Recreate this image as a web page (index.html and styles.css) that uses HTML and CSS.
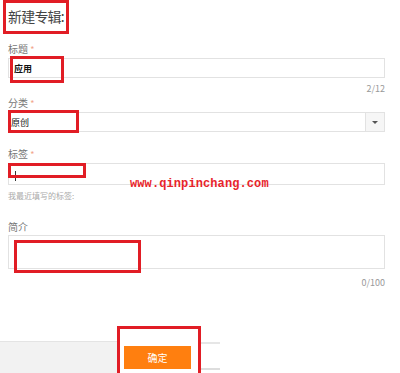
FILE: index.html
```html
<!DOCTYPE html>
<html lang="zh-CN">
<head>
  <meta charset="UTF-8">
  <title>新建专辑</title>
  <link rel="stylesheet" href="styles.css">
</head>
<body>
  <div class="page">
    <h2 class="title">新建专辑:</h2>

    <div class="field name">
      <label class="label">标题 <span class="req">*</span></label>
      <div class="input"><span class="value">应用</span></div>
      <div class="count">2/12</div>
    </div>

    <div class="field type">
      <label class="label">分类 <span class="req">*</span></label>
      <div class="select">
        <span class="value plain">原创</span>
        <span class="arrow"></span>
      </div>
    </div>

    <div class="field tags">
      <label class="label">标签 <span class="req">*</span></label>
      <div class="input"><span class="caret"></span></div>
      <div class="hint">我最近填写的标签:</div>
    </div>

    <div class="field intro">
      <label class="label">简介</label>
      <div class="textarea"></div>
      <div class="count">0/100</div>
    </div>

    <div class="footer">
      <div class="footer-left"></div>
      <button class="submit-btn">确定</button>
      <div class="footer-right"></div>
    </div>

    <div class="watermark">www.qinpinchang.com</div>

    <!-- annotation boxes -->
    <div class="mark mark-title"></div>
    <div class="mark mark-name"></div>
    <div class="mark mark-type"></div>
    <div class="mark mark-tag"></div>
    <div class="mark mark-intro"></div>
    <div class="mark mark-btn"></div>
  </div>
</body>
</html>
```

FILE: styles.css
```css
body {
  margin: 0;
  background: #fff;
  font-family: "Noto Sans CJK SC", "Liberation Sans", sans-serif;
  color: #333;
}
.page {
  position: relative;
  width: 400px;
  height: 373px;
  overflow: hidden;
  padding: 0 15px 0 8px;
  box-sizing: border-box;
  display: flex;
  flex-direction: column;
}
.title {
  margin: 6px 0 0 0;
  font-size: 14px;
  font-weight: normal;
  color: #444;
  letter-spacing: -0.8px;
  line-height: 20px;
}
.field {
  display: flex;
  flex-direction: column;
}
.label {
  font-size: 10px;
  color: #777;
  line-height: 12px;
  margin-bottom: 2px;
}
.name { margin-top: 17px; }
.type { margin-top: 2px; }
.req {
  color: #f2a48c;
  font-size: 9px;
}
.input, .select {
  height: 20px;
  border: 1px solid #e2e2e2;
  box-sizing: border-box;
  display: flex;
  align-items: center;
}
.value {
  font-size: 9px;
  color: #111;
  padding-left: 5px;
  font-weight: bold;
}
.value.plain {
  font-weight: normal;
  padding-left: 2px;
}
.select {
  justify-content: space-between;
}
.arrow {
  width: 18px;
  height: 18px;
  border-left: 1px solid #e2e2e2;
  background: #f6f6f6;
  position: relative;
}
.arrow::after {
  content: "";
  position: absolute;
  left: 6px;
  top: 8px;
  border-left: 3px solid transparent;
  border-right: 3px solid transparent;
  border-top: 3px solid #555;
}
.count {
  align-self: flex-end;
  font-size: 9px;
  color: #999;
  line-height: 12px;
  margin-top: 5px;
}
.tags {
  margin-top: 16px;
}
.tags .input {
  height: 22px;
}
.caret {
  width: 1px;
  height: 10px;
  background: #333;
  margin-left: 6px;
  margin-top: 4px;
}
.hint {
  font-size: 8px;
  color: #aaa;
  line-height: 10px;
  margin-top: 6px;
}
.intro {
  margin-top: 20px;
}
.textarea {
  height: 34px;
  border: 1px solid #e2e2e2;
  box-sizing: border-box;
}
.intro .count {
  margin-top: 8px;
}
.footer {
  margin: auto 0 0 -8px;
  width: 220px;
  height: 32px;
  display: flex;
  align-items: flex-end;
}
.footer-left {
  width: 117px;
  height: 100%;
  background: #f2f2f2;
  border-top: 1px solid #e4e4e4;
  box-sizing: border-box;
}
.submit-btn {
  width: 67px;
  height: 23px;
  margin: 0 7px 4px 7px;
  border: none;
  background: #ff7f0f;
  color: #fff;
  font-family: "Noto Sans CJK SC", sans-serif;
  font-size: 10px;
  padding: 0;
}
.footer-right {
  flex: 1;
  height: 28px;
  border-top: 2px solid #e6e6e6;
  border-bottom: 2px solid #ddd;
  box-sizing: border-box;
  margin-bottom: 3px;
}
.watermark {
  position: absolute;
  left: 130px;
  top: 177px;
  font-family: "Liberation Mono", monospace;
  font-size: 12px;
  font-weight: bold;
  color: #e8242b;
  letter-spacing: 0.1px;
}
.mark {
  position: absolute;
  border: 3px solid #e11d25;
  box-sizing: border-box;
}
.mark-title { left: 3px; top: 0; width: 66px; height: 34px; }
.mark-name { left: 10px; top: 56px; width: 54px; height: 27px; }
.mark-type { left: 8px; top: 110px; width: 71px; height: 23px; }
.mark-tag { left: 8px; top: 163px; width: 78px; height: 15px; }
.mark-intro { left: 14px; top: 240px; width: 127px; height: 33px; }
.mark-btn { left: 117px; top: 326px; width: 84px; height: 50px; }
```
